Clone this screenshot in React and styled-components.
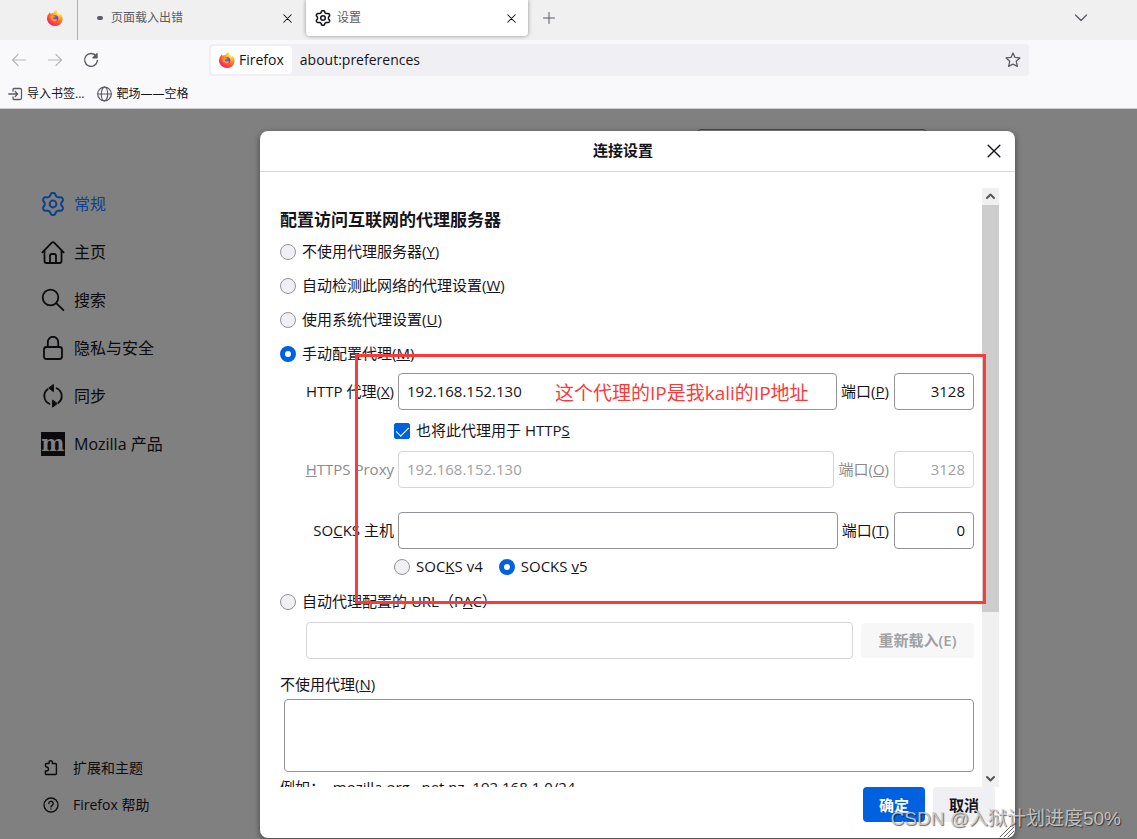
import React, { useState } from 'react'
import styled, { createGlobalStyle, css } from 'styled-components'

const GlobalStyle = createGlobalStyle`
    * {
        box-sizing: border-box;
    }

    body {
        margin: 0;
        font-family: "Open Sans", "Noto Sans CJK SC", sans-serif;
        font-size: 15px;
        line-height: 18px;
        color: #15141a;
    }

    button, input, textarea {
        font: inherit;
        color: inherit;
        margin: 0;
    }

    button {
        border: 0;
        padding: 0;
        background: none;
    }
`

// six rounded teeth around a hub
const gearPath = (size, radius, depth) => {
    const points = []
    for (let i = 0; i < 96; i++) {
        const angle = (i / 96) * Math.PI * 2
        const r = radius + depth * Math.tanh(1.6 * Math.cos(6 * angle))
        const x = size / 2 + r * Math.sin(angle)
        const y = size / 2 - r * Math.cos(angle)
        points.push(`${x.toFixed(2)} ${y.toFixed(2)}`)
    }
    return `M${points.join('L')}Z`
}

const Icon = ({ size = 16, box = 16, width = 1, children }) => (
    <Svg
        width={size}
        height={size}
        viewBox={`0 0 ${box} ${box}`}
        fill="none"
        stroke="currentColor"
        strokeWidth={width}
        strokeLinecap="round"
        strokeLinejoin="round"
        aria-hidden="true"
    >
        {children}
    </Svg>
)

const GearIcon = ({ size, width }) => (
    <Icon size={size} box={24} width={width}>
        <path d={gearPath(24, 9.6, 1.5)} />
        <circle cx="12" cy="12" r="3.4" />
    </Icon>
)

const CloseIcon = ({ size, width }) => (
    <Icon size={size} box={12} width={width}>
        <path d="M1 1l10 10M11 1L1 11" />
    </Icon>
)

const FirefoxLogo = () => (
    <Svg width="16" height="16" viewBox="0 0 32 32" aria-hidden="true">
        <defs>
            <radialGradient id="flame" cx="0.8" cy="0.1" r="1.05">
                <stop offset="0.1" stopColor="#fff44f" />
                <stop offset="0.35" stopColor="#ffb32e" />
                <stop offset="0.6" stopColor="#ff6a2a" />
                <stop offset="0.85" stopColor="#ff2f52" />
                <stop offset="1" stopColor="#e31587" />
            </radialGradient>
            <radialGradient id="globe" cx="0.4" cy="0.4" r="0.7">
                <stop offset="0" stopColor="#9059ff" />
                <stop offset="1" stopColor="#5b3bb4" />
            </radialGradient>
        </defs>
        <path
            fill="url(#flame)"
            d="M20 0c-1 4 1 6 3 8 1 1 2 2 2 3 1-2 1-4 0-5 4 3 7 7 6 13-1 8-7 13-15 13S1 26 0 18c0-4 1-8 4-11 0 0 0-2 1-3 0 2 1 3 2 3 2 0 3-1 6-1 1-3 3-5 7-6z"
        />
        <circle fill="url(#globe)" cx="16" cy="17" r="6.5" />
        <path fill="#ff9a2b" d="M7 12c3-2 6-1 9 0 0 2-3 2-4 3-1 2 1 4 4 4 2 0 3-1 5 0-1 3-4 5-7 4-5-1-8-5-7-11z" />
    </Svg>
)

const categories = [
    { name: '常规', icon: <GearIcon size={24} width={2} />, active: true },
    {
        name: '主页',
        icon: (
            <Icon size={24} box={24} width={1.8}>
                <path d="M1.4 12.4L10.6 2.8a2 2 0 0 1 2.8 0l9.2 9.6M3.5 10.5V21a2 2 0 0 0 2 2h13a2 2 0 0 0 2-2V10.5M9 23v-7a2 2 0 0 1 2-2h2a2 2 0 0 1 2 2v7" />
            </Icon>
        ),
    },
    {
        name: '搜索',
        icon: (
            <Icon size={24} box={24} width={1.8}>
                <circle cx="9.5" cy="9.5" r="7.8" />
                <path d="M15.2 15.2L22.4 22.2" />
            </Icon>
        ),
    },
    {
        name: '隐私与安全',
        icon: (
            <Icon size={24} box={24} width={1.8}>
                <rect x="3" y="11" width="18" height="12" rx="2.5" />
                <path d="M6.8 11V6a5.2 5.2 0 0 1 10.4 0v5" />
            </Icon>
        ),
    },
    {
        name: '同步',
        icon: (
            <Icon size={24} box={24} width={1.8}>
                <path d="M6.6 5.2a8.6 8.6 0 0 0 1.8 14.6M17.4 18.8a8.6 8.6 0 0 0-1.8-14.6" />
                <path fill="currentColor" strokeWidth="1" d="M12.4 .8v6.8L8 4.2zM11.6 16.4v6.8l4.4-3.4z" />
            </Icon>
        ),
    },
    { name: 'Mozilla 产品', icon: 'm' },
]

const Field = ({ id, label, value, port, portLabel, disabled }) => (
    <FieldRow>
        <FieldLabel htmlFor={id} $disabled={disabled}>{label}</FieldLabel>
        <TextInput id={id} defaultValue={value} disabled={disabled} />
        <PortLabel htmlFor={`${id}-port`} $disabled={disabled}>端口(<u>{portLabel}</u>)</PortLabel>
        <PortInput id={`${id}-port`} defaultValue={port} disabled={disabled} />
    </FieldRow>
)

function App() {
    const [mode, setMode] = useState('manual')
    const [socks, setSocks] = useState('v5')

    const modeRadio = (value, label) => (
        <OptionRow>
            <Radio name="mode" checked={mode === value} onChange={() => setMode(value)} />
            <span>{label}</span>
        </OptionRow>
    )

    return (
        <Window>
            <GlobalStyle />
            <TabStrip>
                <PinnedTab aria-label="Firefox"><FirefoxLogo /></PinnedTab>
                <Tab>
                    <LoadingDot />
                    <TabTitle>页面载入出错</TabTitle>
                    <TabClose aria-label="关闭标签页"><CloseIcon size={9} width={1.4} /></TabClose>
                </Tab>
                <Tab $active>
                    <GearIcon size={16} width={2.3} />
                    <TabTitle>设置</TabTitle>
                    <TabClose aria-label="关闭标签页"><CloseIcon size={9} width={1.4} /></TabClose>
                </Tab>
                <ToolButton aria-label="新建标签页">
                    <Icon><path d="M8 2.5v11M2.5 8h11" /></Icon>
                </ToolButton>
                <Spacer />
                <ToolButton aria-label="列出标签页">
                    <Icon width={1.3}><path d="M2.5 5L8 10.5 13.5 5" /></Icon>
                </ToolButton>
            </TabStrip>
            <NavBar>
                <ToolButton aria-label="后退" disabled>
                    <Icon width={1.2}><path d="M14.5 8h-13M7 2.5L1.5 8 7 13.5" /></Icon>
                </ToolButton>
                <ToolButton aria-label="前进" disabled>
                    <Icon width={1.2}><path d="M1.5 8h13M9 2.5L14.5 8 9 13.5" /></Icon>
                </ToolButton>
                <ToolButton aria-label="刷新">
                    <Icon width={1.4}>
                        <path d="M13.3 4.3A6.4 6.4 0 1 0 14.4 8.5" />
                        <path d="M14 1.8v4h-4z" fill="currentColor" />
                    </Icon>
                </ToolButton>
                <UrlBar>
                    <Identity><FirefoxLogo />Firefox</Identity>
                    <UrlInput aria-label="地址" defaultValue="about:preferences" />
                    <ToolButton aria-label="添加书签">
                        <Icon width={1.3}>
                            <path d="M8 1l2 4.4 4.9.5-3.7 3.3 1.2 5.2L8 12.2l-4.4 2.2 1.2-5.2L1.1 5.9 6 5.4z" />
                        </Icon>
                    </ToolButton>
                </UrlBar>
            </NavBar>
            <Bookmarks>
                <Bookmark href="#import">
                    <Icon width={1.3}>
                        <path d="M5 5V3.5a1 1 0 0 1 1-1h6A1.5 1.5 0 0 1 13.500 4v8a1.5 1.5 0 0 1-1.5 1.5H6a1 1 0 0 1-1-1V11M.8 8h8.500M7.200 5.500L9.700 8l-2.500 2.500" />
                    </Icon>
                    导入书签...
                </Bookmark>
                <Bookmark href="#range">
                    <Icon width={1.2}>
                        <circle cx="7.500" cy="8" r="6.800" />
                        <ellipse cx="7.500" cy="8" rx="3.200" ry="6.800" />
                        <path d="M.7 8h13.600" />
                    </Icon>
                    靶场——空格
                </Bookmark>
            </Bookmarks>

            <Page>
                <PageSearch aria-label="在设置中查找" />
                <Sidebar>
                    {categories.map((item) => (
                        <Category key={item.name} href="#category" $active={item.active}>
                            {item.icon === 'm' ? <MozillaMark>m</MozillaMark> : item.icon}
                            {item.name}
                        </Category>
                    ))}
                    <Spacer />
                    <SideLink href="#addons">
                        <Icon width={1.4}>
                            <path d="M2.5 6V4.5a1 1 0 0 1 1-1H6v-1a1.700 1.700 0 0 1 3.400 0v1h3a1 1 0 0 1 1 1v9a1 1 0 0 1-1 1h-9a1 1 0 0 1-1-1V11h1a1.700 1.700 0 0 0 0-4z" />
                        </Icon>
                        扩展和主题
                    </SideLink>
                    <SideLink href="#help">
                        <Icon width={1.3}>
                            <circle cx="8" cy="8" r="7" />
                            <path d="M5.8 6.5a2.2 2.2 0 1 1 3.3 1.900c-.8.5-1.100.8-1.100 1.600M8 12v.1" />
                        </Icon>
                        Firefox 帮助
                    </SideLink>
                </Sidebar>

                <Dialog role="dialog" aria-labelledby="dialog-title">
                    <DialogHeader>
                        <DialogTitle id="dialog-title">连接设置</DialogTitle>
                        <DialogClose aria-label="关闭"><CloseIcon size={14} width={1.2} /></DialogClose>
                    </DialogHeader>
                    <DialogBody>
                        <Form>
                            <Heading>配置访问互联网的代理服务器</Heading>
                            {modeRadio('none', <>不使用代理服务器(<u>Y</u>)</>)}
                            {modeRadio('detect', <>自动检测此网络的代理设置(<u>W</u>)</>)}
                            {modeRadio('system', <>使用系统代理设置(<u>U</u>)</>)}
                            {modeRadio('manual', <>手动配置代理(<u>M</u>)</>)}
                            <ManualGroup>
                                <Field id="http" label={<>HTTP 代理(<u>X</u>)</>} value="192.168.152.130" port="3128" portLabel="P" />
                                <SubRow>
                                    <Option>
                                        <Checkbox defaultChecked />
                                        <span>也将此代理用于 HTTP<u>S</u></span>
                                    </Option>
                                </SubRow>
                                <Field id="https" label={<><u>H</u>TTPS Proxy</>} value="192.168.152.130" port="3128" portLabel="O" disabled />
                                <Gap />
                                <Field id="socks" label={<>SO<u>C</u>KS 主机</>} value="" port="0" portLabel="T" />
                                <SubRow>
                                    <Option>
                                        <Radio name="socks" checked={socks === 'v4'} onChange={() => setSocks('v4')} />
                                        <span>SOC<u>K</u>S v4</span>
                                    </Option>
                                    <Option>
                                        <Radio name="socks" checked={socks === 'v5'} onChange={() => setSocks('v5')} />
                                        <span>SOCKS <u>v</u>5</span>
                                    </Option>
                                </SubRow>
                            </ManualGroup>
                            {modeRadio('pac', <>自动代理配置的 URL（P<u>A</u>C）</>)}
                            <PacRow>
                                <TextInput aria-label="自动代理配置的 URL" disabled />
                                <ReloadButton disabled>重新载入(E)</ReloadButton>
                            </PacRow>
                            <ExceptionsLabel htmlFor="exceptions">不使用代理(<u>N</u>)</ExceptionsLabel>
                            <Exceptions id="exceptions" />
                            <Example>例如： .mozilla.org, .net.nz, 192.168.1.0/24</Example>
                        </Form>
                        <Scrollbar>
                            <ScrollArrow aria-label="向上">
                                <Icon size={11} box={11} width={2}><path d="M2 7l3.500-3.500L9 7" /></Icon>
                            </ScrollArrow>
                            <ScrollTrack><ScrollThumb /></ScrollTrack>
                            <ScrollArrow aria-label="向下">
                                <Icon size={11} box={11} width={2}><path d="M2 4l3.500 3.500L9 4" /></Icon>
                            </ScrollArrow>
                        </Scrollbar>
                    </DialogBody>
                    <DialogFooter>
                        <DialogButton $primary>确定</DialogButton>
                        <DialogButton>取消</DialogButton>
                    </DialogFooter>
                    <Resizer>
                        <Icon size={16}><path stroke="#6b6b6b" d="M1 15L15 1M5 15L15 5M9 15l6-6M13 15l2-2" /></Icon>
                    </Resizer>
                    <Highlight>
                        <Note>这个代理的IP是我kali的IP地址</Note>
                    </Highlight>
                </Dialog>
            </Page>
            <Watermark>CSDN @入狱计划进度50%</Watermark>
        </Window>
    )
}

const Svg = styled.svg`
    display: block;
    flex: none;
`

const Window = styled.div`
    position: relative;
    height: 100vh;
    display: flex;
    flex-direction: column;
    overflow: hidden;
    background: #f9f9fb;
`

const Spacer = styled.div`
    flex: 1;
`

const TabStrip = styled.div`
    display: flex;
    height: 40px;
    padding-right: 38px;
    background: #f0f0f0;
`

const PinnedTab = styled.button`
    width: 78px;
    margin-right: 2px;
    padding: 0 15px 4px 47px;
    border-right: 1px solid #b0b0b0;
`

const Tab = styled.div`
    display: flex;
    align-items: center;
    gap: 6px;
    width: 222px;
    height: 36px;
    padding: 0 10px 0 9px;
    margin-left: 2px;
    font-size: 12px;

    ${(props) => props.$active && css`
        background: white;
        border-radius: 0 0 4px 4px;
        box-shadow: 0 0 4px rgba(0, 0, 0, 0.4);
    `}
`

const LoadingDot = styled.span`
    width: 6px;
    height: 4px;
    margin: 0 2px 0 6px;
    border-radius: 3px;
    background: #5b5b66;
`

const TabTitle = styled.span`
    flex: 1;
    color: #5b5b66;
`

const TabClose = styled.button`
    display: grid;
    place-items: center;
    width: 14px;
    height: 20px;
`

const ToolButton = styled.button`
    display: grid;
    place-items: center;
    width: 36px;
    height: 36px;
    color: #5b5b66;

    ${TabStrip} & {
        margin-left: 3px;
    }

    &:disabled {
        color: #b9b9c0;
    }
`

const NavBar = styled.div`
    display: flex;
    align-items: center;
    height: 40px;
    padding: 0 108px 0 1px;
`

const UrlBar = styled.div`
    flex: 1;
    display: flex;
    align-items: center;
    height: 32px;
    margin-left: 100px;
    padding: 2px 0 2px 2px;
    background: #f0f0f4;
    border-radius: 4px;
    font-size: 14px;

    ${ToolButton} {
        width: 32px;
    }
`

const Identity = styled.button`
    display: flex;
    align-items: center;
    gap: 4px;
    height: 28px;
    padding: 0 8px;
    border-radius: 3px;
    background: white;
`

const UrlInput = styled.input`
    flex: 1;
    min-width: 0;
    padding: 0 8px;
    border: 0;
    background: none;
`

const Bookmarks = styled.div`
    display: flex;
    gap: 13px;
    height: 29px;
    padding: 0 8px;
    border-bottom: 1px solid #ccccce;
`

const Bookmark = styled.a`
    display: flex;
    align-items: center;
    gap: 3px;
    font-size: 12px;
    color: #15141a;
    text-decoration: none;

    svg {
        color: #5b5b66;
    }
`

const Page = styled.div`
    position: relative;
    flex: 1;
    min-height: 0;
    display: grid;
    grid-template-columns: 260px minmax(0, 1fr) 122px;
    grid-template-rows: minmax(0, 1fr);
    background: #808080;
`

const PageSearch = styled.input`
    position: absolute;
    top: 20px;
    right: 210px;
    width: 230px;
    height: 32px;
    border: 1px solid #48484e;
    border-radius: 4px;
    background: #808080;
`

const Sidebar = styled.nav`
    display: flex;
    flex-direction: column;
    padding: 71px 0 16px 41px;
`

const Category = styled.a`
    display: flex;
    align-items: center;
    gap: 9px;
    height: 48px;
    font-size: 16px;
    color: ${(props) => (props.$active ? '#0a4290' : '#0b0a0d')};
    text-decoration: none;
`

const MozillaMark = styled.span`
    display: flex;
    align-items: center;
    justify-content: center;
    width: 24px;
    height: 24px;
    padding-bottom: 3px;
    background: #0b0a0d;
    color: #808080;
    font: bold 22px/20px "DejaVu Serif", serif;
`

const SideLink = styled.a`
    display: flex;
    align-items: center;
    gap: 14px;
    height: 37px;
    padding-left: 2px;
    font-size: 14px;
    color: #0b0a0d;
    text-decoration: none;
`

const Dialog = styled.div`
    position: relative;
    display: flex;
    flex-direction: column;
    margin: 22px 0 1px;
    background: white;
    border-radius: 8px;
    box-shadow: 0 2px 6px rgba(0, 0, 0, 0.5);
`

const DialogHeader = styled.div`
    display: flex;
    align-items: center;
    height: 41px;
    padding-right: 13px;
    border-bottom: 1px solid #d5d5d7;
`

const DialogTitle = styled.h2`
    flex: 1;
    margin: 0;
    padding-bottom: 2px;
    font-size: 15px;
    text-align: center;
`

const DialogClose = styled.button`
    display: grid;
    place-items: center;
    width: 16px;
    height: 24px;
`

const DialogBody = styled.div`
    flex: 1;
    min-height: 0;
    display: flex;
    gap: 8px;
    padding: 16px 16px 0 20px;
`

const Form = styled.div`
    flex: 1;
    min-width: 0;
    padding-top: 20px;
    overflow: hidden;
`

const Heading = styled.h3`
    margin: 0 0 3px;
    font-size: 17px;
    line-height: 24px;
`

const Option = styled.label`
    display: flex;
    align-items: center;
    gap: 6px;

    span {
        padding-bottom: 2px;
    }
`

const OptionRow = styled(Option)`
    height: 34px;
`

const Radio = styled.input.attrs({ type: 'radio' })`
    appearance: none;
    width: 16px;
    height: 16px;
    border: 1px solid #949498;
    border-radius: 50%;
    background: #f0f0f4;

    &:checked {
        border: 5px solid #0061e0;
        background: white;
    }
`

const Checkbox = styled.input.attrs({ type: 'checkbox' })`
    appearance: none;
    display: grid;
    justify-content: center;
    width: 16px;
    height: 16px;
    border: 1px solid #949498;
    border-radius: 2px;
    background: #f0f0f4;

    &:checked {
        border-color: #0061e0;
        background: #0061e0;
    }

    &:checked::after {
        content: '';
        width: 6px;
        height: 11px;
        border: solid white;
        border-width: 0 1px 1px 0;
        transform: rotate(45deg);
    }
`

const ManualGroup = styled.div`
    padding-top: 2px;
`

const FieldRow = styled.div`
    display: flex;
    align-items: center;
    gap: 4px;
`

const FieldLabel = styled.label`
    width: 114px;
    padding-bottom: 2px;
    text-align: right;
    color: ${(props) => (props.$disabled ? '#8c8c90' : 'inherit')};
`

const PortLabel = styled.label`
    padding: 0 1px 2px 0;
    color: ${(props) => (props.$disabled ? '#8c8c90' : 'inherit')};
`

const TextInput = styled.input`
    flex: 1;
    min-width: 0;
    height: 37px;
    padding: 0 8px 2px;
    border: 1px solid #949498;
    border-radius: 4px;
    background: white;

    &:disabled {
        border-color: #d5d5d9;
        color: #a0a0a4;
    }
`

const PortInput = styled(TextInput)`
    flex: none;
    width: 80px;
    text-align: right;
`

const SubRow = styled.div`
    display: flex;
    gap: 16px;
    height: 41px;
    padding-left: 114px;

    &:last-child {
        height: 36px;
    }
`

const Gap = styled.div`
    height: 24px;
`

const PacRow = styled.div`
    display: flex;
    align-items: center;
    gap: 8px;
    padding: 3px 0 10px 26px;
`

const ReloadButton = styled.button`
    width: 113px;
    height: 35px;
    padding-bottom: 2px;
    border-radius: 4px;
    background: #f7f7f8;
    color: #a0a0a4;
    font-weight: 600;
`

const ExceptionsLabel = styled.label`
    display: block;
    line-height: 30px;
`

const Exceptions = styled.textarea`
    display: block;
    width: calc(100% - 4px);
    height: 73px;
    margin-left: 4px;
    padding: 8px;
    border: 1px solid #949498;
    border-radius: 4px;
    resize: none;
`

const Example = styled.p`
    margin: 3px 0 0;
    line-height: 24px;
`

const Scrollbar = styled.div`
    display: flex;
    flex-direction: column;
    width: 17px;
    background: #f0f0f0;
`

const ScrollArrow = styled.button`
    display: grid;
    place-items: center;
    height: 17px;
    color: #555;
`

const ScrollTrack = styled.div`
    flex: 1;
`

const ScrollThumb = styled.div`
    height: 72%;
    background: #cdcdcd;
`

const DialogFooter = styled.div`
    display: flex;
    justify-content: flex-end;
    gap: 8px;
    padding: 0 20px 16px;
`

const DialogButton = styled.button`
    width: 62px;
    height: 35px;
    border-radius: 4px;
    font-weight: 600;
    background: ${(props) => (props.$primary ? '#0061e0' : '#f0f0f4')};
    color: ${(props) => (props.$primary ? 'white' : '#15141a')};
`

const Resizer = styled.div`
    position: absolute;
    right: 0;
    bottom: 0;
`

const Highlight = styled.div`
    position: absolute;
    top: 223px;
    left: 95px;
    right: 29px;
    height: 250px;
    padding: 24px 0 0 197px;
    border: 3px solid #ff3838;
    pointer-events: none;
`

const Note = styled.p`
    margin: 0;
    font-size: 19px;
    line-height: 24px;
    color: #ff3838;
`

const Watermark = styled.div`
    position: absolute;
    right: 16px;
    bottom: 8px;
    font-family: "Liberation Sans", "Noto Sans CJK SC", sans-serif;
    font-size: 19px;
    line-height: 24px;
    color: rgba(205, 205, 205, 0.9);
    text-shadow: 1px 1px 1px rgba(0, 0, 0, 0.6);
`

export default App
